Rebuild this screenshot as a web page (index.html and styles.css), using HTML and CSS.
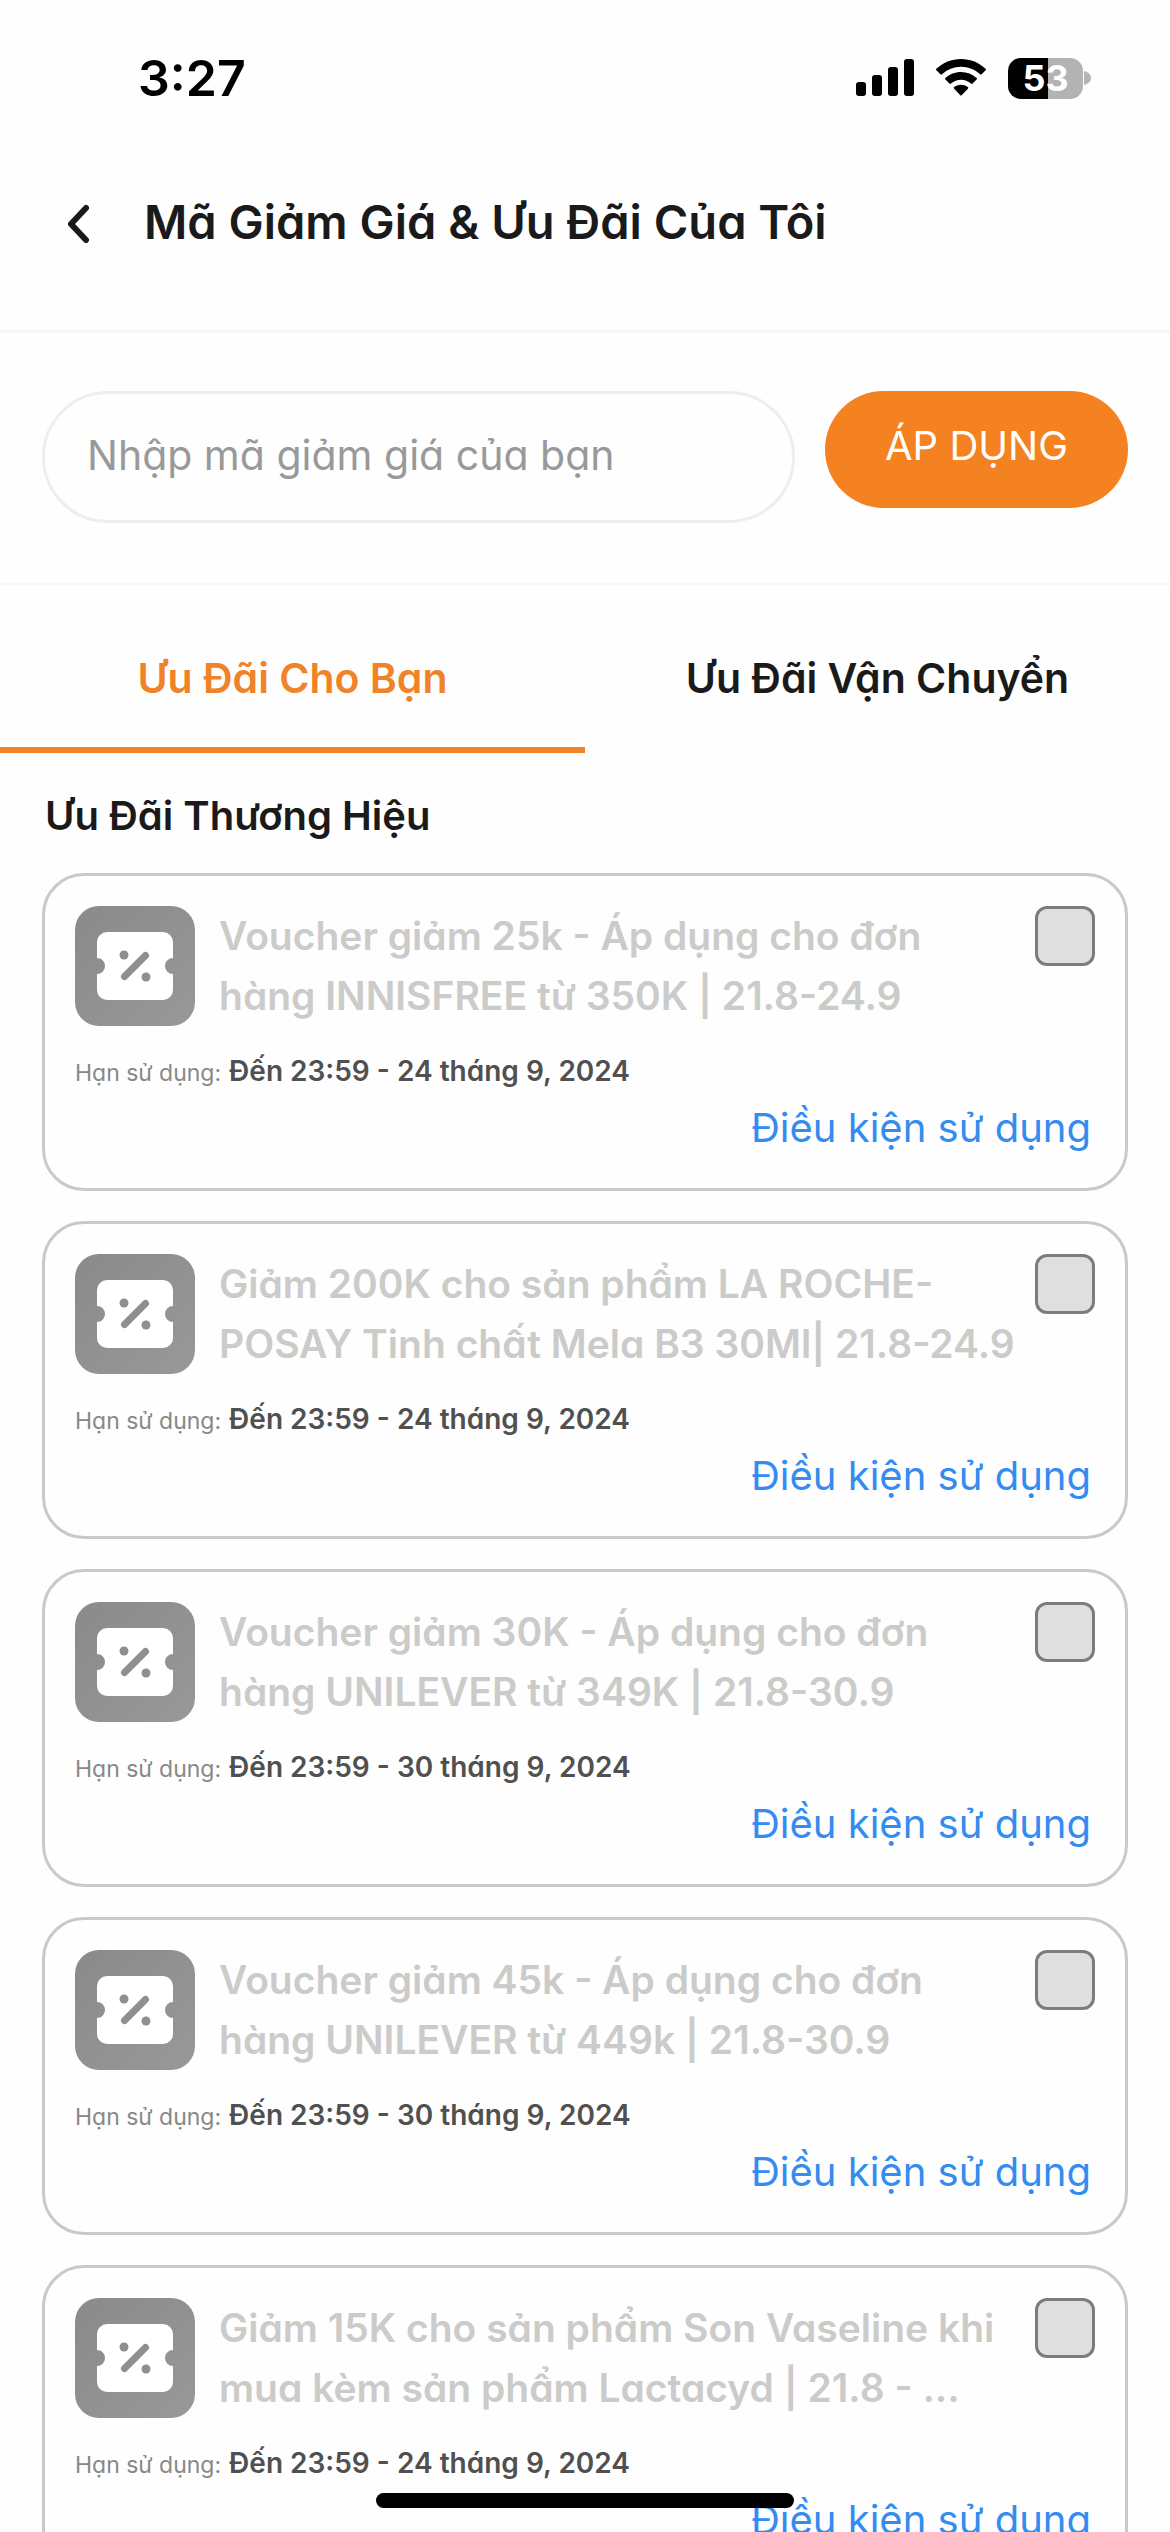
FILE: index.html
```html
<!DOCTYPE html>
<html lang="vi">
<head>
  <meta charset="UTF-8" />
  <title>Mã Giảm Giá &amp; Ưu Đãi Của Tôi</title>
  <meta name="viewport" content="width=device-width, initial-scale=1.0" />
  <link rel="stylesheet" href="styles.css">
</head>
<body>

  <!-- Ticket icon shared by all the cards -->
  <svg class="sprite" aria-hidden="true">
    <symbol id="ticket" viewBox="0 0 120 120">
      <path fill="#fff" d="M32 26h56a10 10 0 0 1 10 10v16a8 8 0 0 0 0 16v16a10 10 0 0 1-10 10H32a10 10 0 0 1-10-10V68a8 8 0 0 0 0-16V36a10 10 0 0 1 10-10z" />
      <circle cx="49" cy="49" r="4.5" fill="#8f8f8f" />
      <circle cx="71" cy="71" r="4.5" fill="#8f8f8f" />
      <path stroke="#8f8f8f" stroke-width="7" stroke-linecap="round" d="M49.500 70.500 70.500 49.500" />
    </symbol>
  </svg>

  <div class="app">
    <div class="status-bar">
      <span class="time">3:27</span>
      <div class="status-icons">
        <svg width="58" height="38" viewBox="0 0 58 38">
          <rect x="0" y="23" width="10" height="14" rx="3" />
          <rect x="16" y="16" width="10" height="21" rx="3" />
          <rect x="32" y="8" width="10" height="29" rx="3" />
          <rect x="48" y="0" width="10" height="37" rx="3" />
        </svg>
        <svg width="50" height="38" viewBox="0 0 50 38">
          <path d="M25 0C15.500 0 6.800 3.700.4 9.800a1 1 0 0 0 0 1.500l4 4a1.200 1.200 0 0 0 1.600 0A27.500 27.500 0 0 1 25 7.800c7.300 0 14 2.800 19 7.500a1.200 1.200 0 0 0 1.600 0l4-4a1 1 0 0 0 0-1.500C43.200 3.700 34.500 0 25 0z" />
          <path d="M25 13c-6 0-11.500 2.300-15.600 6a1 1 0 0 0 0 1.600l4 4a1.200 1.200 0 0 0 1.600 0 14.800 14.800 0 0 1 20 0 1.200 1.200 0 0 0 1.600 0l4-4a1 1 0 0 0 0-1.600A23 23 0 0 0 25 13z" />
          <path d="M25 25.800c-2.600 0-5 .9-6.800 2.300a1 1 0 0 0-.1 1.600l6 6.200a1.200 1.200 0 0 0 1.800 0l6-6.200a1 1 0 0 0-.1-1.600A11 11 0 0 0 25 25.800z" />
        </svg>
        <div class="battery">
          <span class="battery-level">53</span>
          <svg width="7" height="14" viewBox="0 0 7 14"><path fill="#b3b3b3" d="M0 0c4 1 7 3.500 7 7s-3 6-7 7z" /></svg>
        </div>
      </div>
    </div>

    <header class="header">
      <button class="back" type="button" aria-label="Quay lại">
        <svg width="24" height="42" viewBox="0 0 24 42"><path d="M20 7 5 23l15 16" /></svg>
      </button>
      <h1>Mã Giảm Giá &amp; Ưu Đãi Của Tôi</h1>
    </header>

    <form class="code-form">
      <input class="code-input" type="text" placeholder="Nhập mã giảm giá của bạn" aria-label="Mã giảm giá" />
      <button class="apply" type="button">ÁP DỤNG</button>
    </form>

    <nav class="tabs">
      <button class="tab active" type="button">Ưu Đãi Cho Bạn</button>
      <button class="tab" type="button">Ưu Đãi Vận Chuyển</button>
    </nav>

    <main class="vouchers">
      <h2>Ưu Đãi Thương Hiệu</h2>

      <div class="card">
        <div class="card-top">
          <svg class="card-icon"><use href="#ticket" /></svg>
          <label class="card-title" for="v1">Voucher giảm 25k - Áp dụng cho đơn<br>hàng INNISFREE từ 350K | 21.8-24.9</label>
          <input class="check" type="checkbox" id="v1" disabled />
        </div>
        <p class="expiry"><span>Hạn sử dụng:</span> <strong>Đến 23:59 - 24 tháng 9, 2024</strong></p>
        <a class="terms" href="#">Điều kiện sử dụng</a>
      </div>

      <div class="card">
        <div class="card-top">
          <svg class="card-icon"><use href="#ticket" /></svg>
          <label class="card-title" for="v2">Giảm 200K cho sản phẩm LA ROCHE-<br>POSAY Tinh chất Mela B3 30Ml| 21.8-24.9</label>
          <input class="check" type="checkbox" id="v2" disabled />
        </div>
        <p class="expiry"><span>Hạn sử dụng:</span> <strong>Đến 23:59 - 24 tháng 9, 2024</strong></p>
        <a class="terms" href="#">Điều kiện sử dụng</a>
      </div>

      <div class="card">
        <div class="card-top">
          <svg class="card-icon"><use href="#ticket" /></svg>
          <label class="card-title" for="v3">Voucher giảm 30K - Áp dụng cho đơn<br>hàng UNILEVER từ 349K | 21.8-30.9</label>
          <input class="check" type="checkbox" id="v3" disabled />
        </div>
        <p class="expiry"><span>Hạn sử dụng:</span> <strong>Đến 23:59 - 30 tháng 9, 2024</strong></p>
        <a class="terms" href="#">Điều kiện sử dụng</a>
      </div>

      <div class="card">
        <div class="card-top">
          <svg class="card-icon"><use href="#ticket" /></svg>
          <label class="card-title" for="v4">Voucher giảm 45k - Áp dụng cho đơn<br>hàng UNILEVER từ 449k | 21.8-30.9</label>
          <input class="check" type="checkbox" id="v4" disabled />
        </div>
        <p class="expiry"><span>Hạn sử dụng:</span> <strong>Đến 23:59 - 30 tháng 9, 2024</strong></p>
        <a class="terms" href="#">Điều kiện sử dụng</a>
      </div>

      <div class="card">
        <div class="card-top">
          <svg class="card-icon"><use href="#ticket" /></svg>
          <label class="card-title" for="v5">Giảm 15K cho sản phẩm Son Vaseline khi<br>mua kèm sản phẩm Lactacyd | 21.8 - ...</label>
          <input class="check" type="checkbox" id="v5" disabled />
        </div>
        <p class="expiry"><span>Hạn sử dụng:</span> <strong>Đến 23:59 - 24 tháng 9, 2024</strong></p>
        <a class="terms" href="#">Điều kiện sử dụng</a>
      </div>
    </main>

    <div class="home-indicator"></div>
  </div>

</body>
</html>
```
FILE: styles.css
```css
* {
  box-sizing: border-box;
}
body {
  margin: 0;
  background: #fefefe;
  color: #1a1a1a;
  font-family: Inter, "Noto Sans", sans-serif;
  font-feature-settings: "cv11";
}
h1, h2, p {
  margin: 0;
}
button, input {
  font-family: inherit;
  font-feature-settings: inherit;
}
button {
  border: 0;
  padding: 0;
  background: none;
  cursor: pointer;
}
.sprite {
  position: absolute;
  width: 0;
  height: 0;
}
.app {
  display: flex;
  flex-direction: column;
  height: 100vh;
  overflow: hidden;
}

/* Status bar */
.status-bar {
  display: flex;
  justify-content: space-between;
  align-items: center;
  padding: 48px 79px 0 138px;
}
.time {
  color: #000;
  font-size: 50px;
  font-weight: 600;
  line-height: 60px;
}
.status-icons {
  display: flex;
  align-items: center;
  gap: 22px;
}
.battery {
  display: flex;
  align-items: center;
  gap: 1px;
}
.battery-level {
  width: 75px;
  border-radius: 13px;
  background: linear-gradient(90deg, #000 53%, #b3b3b3 53%);
  color: #fff;
  font-size: 36px;
  font-weight: 700;
  line-height: 41px;
  text-align: center;
}

/* Header */
.header {
  display: flex;
  align-items: center;
  gap: 54px;
  padding: 84px 66px 78px;
  border-bottom: 3px solid #f7f7f7;
}
.back svg {
  display: block;
  fill: none;
  stroke: #1a1a1a;
  stroke-width: 6;
  stroke-linecap: round;
  stroke-linejoin: round;
}
h1 {
  font-size: 47px;
  font-weight: 600;
  line-height: 60px;
}

/* Discount code */
.code-form {
  display: flex;
  align-items: flex-start;
  gap: 30px;
  padding: 58px 42px 60px;
  border-bottom: 2px solid #f7f7f7;
}
.code-input {
  flex: 1;
  min-width: 0;
  height: 132px;
  padding: 0 42px 4px;
  border: 3px solid #eee;
  border-radius: 66px;
  background: none;
  font-size: 41px;
}
.code-input::placeholder {
  color: #999;
  opacity: 1;
}
.apply {
  height: 117px;
  padding: 0 60px 8px;
  border-radius: 59px;
  background: #f58220;
  color: #fff;
  font-size: 40px;
}

/* Tabs */
.tabs {
  display: flex;
}
.tab {
  flex: 1;
  padding: 63px 0 39px;
  border-bottom: 6px solid transparent;
  color: #1a1a1a;
  font-size: 41px;
  font-weight: 600;
  line-height: 60px;
}
.tab.active {
  border-color: #f08228;
  color: #f08228;
}

/* Vouchers */
.vouchers {
  display: flex;
  flex-direction: column;
  gap: 30px;
  padding: 36px 42px;
}
h2 {
  padding-left: 3px;
  font-size: 40px;
  font-weight: 600;
  line-height: 54px;
}
.card {
  display: flex;
  flex-direction: column;
  padding: 30px;
  border: 3px solid #c9c9c9;
  border-radius: 42px;
}
.card-top {
  display: flex;
  align-items: flex-start;
}
.card-icon {
  flex: none;
  width: 120px;
  height: 120px;
  margin-right: 24px;
  border-radius: 24px;
  background: linear-gradient(135deg, #8a8a8a, #989898);
}
.card-title {
  flex: 1;
  color: #cbcbc9;
  font-size: 39px;
  font-weight: 600;
  line-height: 60px;
  white-space: nowrap;
}
.check {
  appearance: none;
  flex: none;
  width: 60px;
  height: 60px;
  margin: 0;
  border: 3px solid #7b7b82;
  border-radius: 12px;
  background: #dfdfdf;
}
.expiry {
  display: flex;
  align-items: baseline;
  gap: 8px;
  margin-top: 18px;
  color: #888;
  font-size: 23px;
  line-height: 40px;
}
.expiry strong {
  color: #505050;
  font-size: 28px;
  font-weight: 600;
  line-height: 54px;
}
.terms {
  align-self: flex-end;
  padding-right: 4px;
  color: #338cf0;
  font-size: 40px;
  line-height: 60px;
  text-decoration: none;
}

.home-indicator {
  position: fixed;
  bottom: 24px;
  left: 50%;
  width: 418px;
  height: 15px;
  margin-left: -209px;
  border-radius: 8px;
  background: #000;
}
```
